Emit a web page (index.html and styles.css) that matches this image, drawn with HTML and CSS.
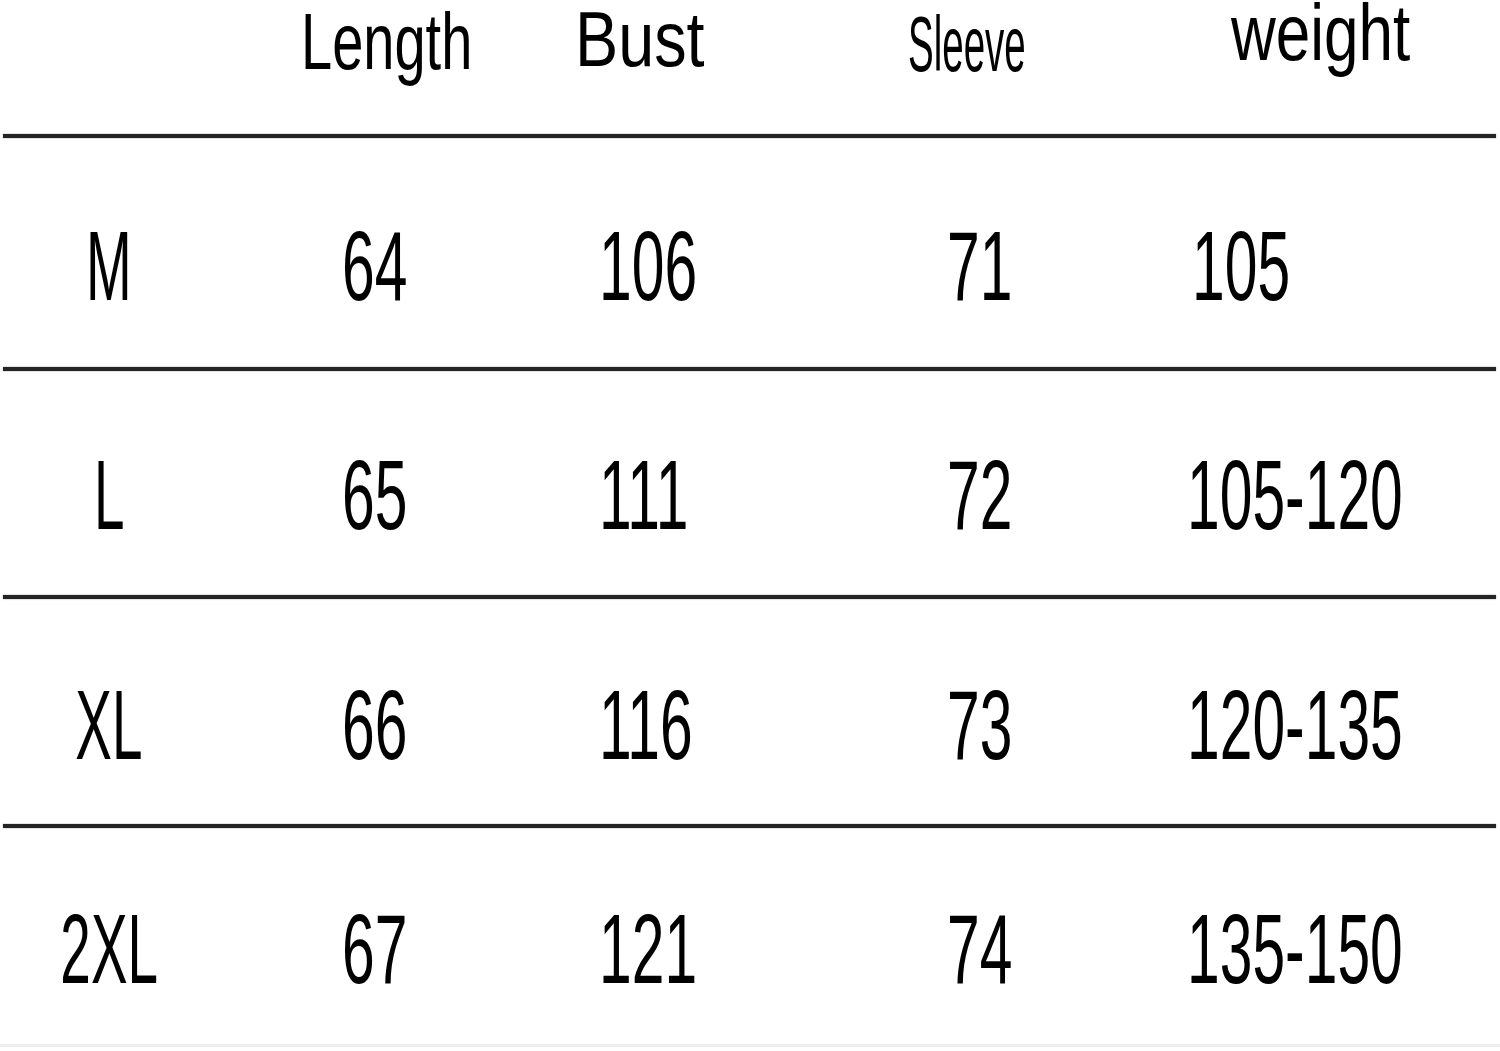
FILE: index.html
```html
<!DOCTYPE html>
<html lang="en">
<head>
<meta charset="utf-8">
<title>Size chart</title>
<link rel="stylesheet" href="styles.css">
</head>
<body>
<div class="chart">
  <div class="head">
    <div class="hcell"></div>
    <div class="hcell h-length"><span class="txt">Length</span></div>
    <div class="hcell h-bust"><span class="txt">Bust</span></div>
    <div class="hcell h-sleeve"><span class="txt">Sleeve</span></div>
    <div class="hcell h-weight"><span class="txt">weight</span></div>
  </div>
  <div class="rule"></div>
  <div class="row row-1">
    <div class="cell size"><span class="txt">M</span></div>
    <div class="cell c2"><span class="txt">64</span></div>
    <div class="cell"><span class="txt">106</span></div>
    <div class="cell"><span class="txt">71</span></div>
    <div class="cell c5"><span class="txt">105</span></div>
  </div>
  <div class="rule"></div>
  <div class="row row-2">
    <div class="cell size"><span class="txt">L</span></div>
    <div class="cell c2"><span class="txt">65</span></div>
    <div class="cell"><span class="txt">111</span></div>
    <div class="cell"><span class="txt">72</span></div>
    <div class="cell"><span class="txt">105-120</span></div>
  </div>
  <div class="rule"></div>
  <div class="row row-3">
    <div class="cell size"><span class="txt">XL</span></div>
    <div class="cell c2"><span class="txt">66</span></div>
    <div class="cell"><span class="txt">116</span></div>
    <div class="cell"><span class="txt">73</span></div>
    <div class="cell"><span class="txt">120-135</span></div>
  </div>
  <div class="rule"></div>
  <div class="row row-4">
    <div class="cell size"><span class="txt">2XL</span></div>
    <div class="cell c2"><span class="txt">67</span></div>
    <div class="cell"><span class="txt">121</span></div>
    <div class="cell"><span class="txt">74</span></div>
    <div class="cell"><span class="txt">135-150</span></div>
  </div>
  <div class="rule-faint"></div>
</div>
</body>
</html>
```

FILE: styles.css
```css
html, body {
  margin: 0;
  padding: 0;
  background: #ffffff;
}

body {
  width: 1500px;
  height: 1051px;
  overflow: hidden;
  font-family: "Liberation Sans", Arial, sans-serif;
  color: #000;
}

.chart {
  display: flex;
  flex-direction: column;
}

.txt {
  display: inline-block;
  white-space: nowrap;
  transform-origin: left center;
}

/* Header */
.head {
  height: 134px;
  display: grid;
  grid-template-columns: 301px 274px 333px 323px 1fr;
  align-items: start;
}

.hcell {
  line-height: 0.8;
}

.h-length {
  font-size: 80px;
  margin-top: 10px;
}
.h-length .txt { transform: scaleX(0.70); }

.h-bust {
  font-size: 78px;
  margin-top: 8px;
}
.h-bust .txt { transform: scaleX(0.83); }

.h-sleeve {
  font-size: 77px;
  margin-top: 14px;
}
.h-sleeve .txt { transform: scaleX(0.50); }

.h-weight {
  font-size: 79px;
  margin-top: 1px;
}
.h-weight .txt { transform: scaleX(0.785); }

/* Rules */
.rule {
  height: 4px;
  margin: 0 4px 0 3px;
  background: #242424;
  box-shadow: 0 0 1.5px rgba(0, 0, 0, 0.55);
}

.rule-faint {
  height: 3px;
  background: #eeeeee;
}

/* Data rows */
.row {
  display: grid;
  grid-template-columns: 218px 381px 348px 240px 1fr;
  align-items: start;
  font-size: 98px;
  line-height: 1;
  box-sizing: border-box;
}

.row-1 { height: 229px; padding-top: 79px; }
.row-2 { height: 224px; padding-top: 75px; }
.row-3 { height: 225px; padding-top: 77px; }
.row-4 { height: 216px; padding-top: 72px; }

.cell .txt {
  transform: scaleX(0.6);
}

.cell.c2 {
  padding-left: 124px;
}

.cell.c5 {
  padding-left: 5px;
}

.cell.size {
  text-align: center;
}

.cell.size .txt {
  transform-origin: center center;
  transform: scaleX(0.56);
}
```
